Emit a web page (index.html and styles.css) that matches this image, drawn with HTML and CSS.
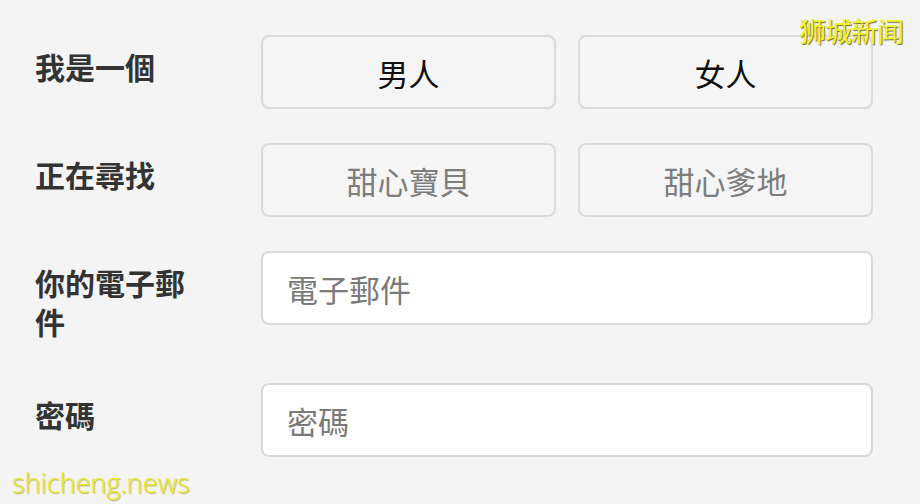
FILE: index.html
```html
<!DOCTYPE html>
<html lang="zh-Hant">
<head>
    <meta charset="UTF-8">
    <meta name="viewport" content="width=device-width, initial-scale=1.0">
    <title>註冊</title>
    <link rel="stylesheet" href="styles.css">
</head>
<body>
    <main class="signup">
        <!-- gender -->
        <div class="form-row">
            <div class="form-label">我是一個</div>
            <div class="choice-group">
                <button class="choice selected">男人</button>
                <button class="choice selected">女人</button>
            </div>
        </div>

        <!-- looking for -->
        <div class="form-row">
            <div class="form-label">正在尋找</div>
            <div class="choice-group">
                <button class="choice">甜心寶貝</button>
                <button class="choice">甜心爹地</button>
            </div>
        </div>

        <div class="form-row">
            <div class="form-label">你的電子郵件</div>
            <input class="field" type="email" placeholder="電子郵件">
        </div>

        <div class="form-row">
            <div class="form-label">密碼</div>
            <input class="field" type="password" placeholder="密碼">
        </div>
    </main>

    <div class="mark-top">狮城新闻</div>
    <div class="mark-bottom">shicheng.news</div>
</body>
</html>
```

FILE: styles.css
```css
/* General */
body {
    margin: 0;
    background: #f4f4f4;
    font-family: "Noto Sans CJK TC", "Noto Sans", sans-serif;
    color: #333;
    overflow: hidden;
}
.signup {
    padding: 35px 47px 0 35px;
}
.form-row {
    display: flex;
    align-items: flex-start;
    margin-bottom: 34px;
}
.form-label {
    flex: 0 0 226px;
    box-sizing: border-box;
    padding: 12px 50px 8px 0;
    font-size: 30px;
    font-weight: bold;
    line-height: 39px;
    color: #333;
}
/* Choice buttons */
.choice-group {
    flex: 1;
    display: flex;
    gap: 22px;
}
.choice {
    flex: 1;
    height: 74px;
    box-sizing: border-box;
    background: #f5f5f5;
    border: 2px solid #dadada;
    border-radius: 8px;
    font-family: "Noto Sans CJK TC", sans-serif;
    font-size: 31px;
    color: #7d7d7d;
    cursor: pointer;
}
.choice.selected {
    color: #111;
}
/* Inputs */
.field {
    flex: 1;
    height: 74px;
    box-sizing: border-box;
    padding: 0 24px;
    background: #fff;
    border: 2px solid #d8d8d8;
    border-radius: 8px;
    font-family: "Noto Sans CJK TC", sans-serif;
    font-size: 31px;
    color: #333;
}
.field::placeholder {
    color: #7a7a7a;
}
/* Watermarks */
.mark-top {
    position: absolute;
    top: 11px;
    left: 799px;
    font-family: "Noto Sans CJK SC", sans-serif;
    font-size: 27px;
    letter-spacing: -1px;
    color: #f2f230;
    text-shadow: 1px 1px 1px #6b6b30;
}
.mark-bottom {
    position: absolute;
    top: 464px;
    left: 12px;
    font-family: "Open Sans", sans-serif;
    font-weight: 300;
    font-size: 27px;
    color: #e9e92a;
    text-shadow: 1px 1px 1px #b5b560;
}
```
